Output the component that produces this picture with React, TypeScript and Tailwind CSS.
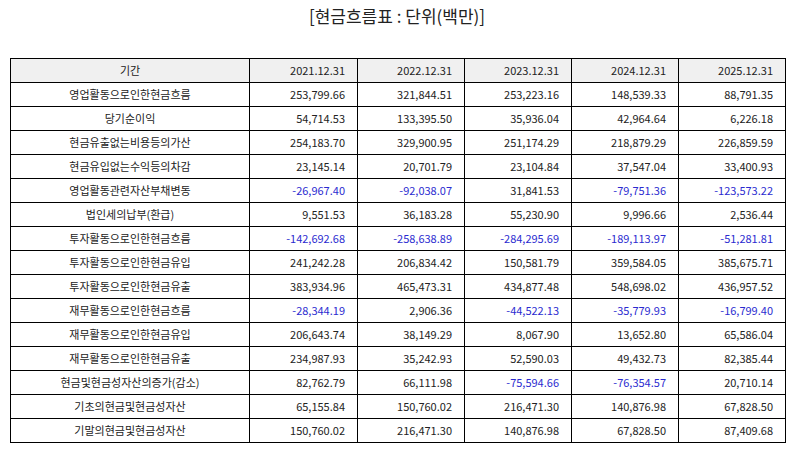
const years = ["2021.12.31", "2022.12.31", "2023.12.31", "2024.12.31", "2025.12.31"];

const rows: [string, string[]][] = [
  ["영업활동으로인한현금흐름", ["253,799.66", "321,844.51", "253,223.16", "148,539.33", "88,791.35"]],
  ["당기순이익", ["54,714.53", "133,395.50", "35,936.04", "42,964.64", "6,226.18"]],
  ["현금유출없는비용등의가산", ["254,183.70", "329,900.95", "251,174.29", "218,879.29", "226,859.59"]],
  ["현금유입없는수익등의차감", ["23,145.14", "20,701.79", "23,104.84", "37,547.04", "33,400.93"]],
  ["영업활동관련자산부채변동", ["-26,967.40", "-92,038.07", "31,841.53", "-79,751.36", "-123,573.22"]],
  ["법인세의납부(환급)", ["9,551.53", "36,183.28", "55,230.90", "9,996.66", "2,536.44"]],
  ["투자활동으로인한현금흐름", ["-142,692.68", "-258,638.89", "-284,295.69", "-189,113.97", "-51,281.81"]],
  ["투자활동으로인한현금유입", ["241,242.28", "206,834.42", "150,581.79", "359,584.05", "385,675.71"]],
  ["투자활동으로인한현금유출", ["383,934.96", "465,473.31", "434,877.48", "548,698.02", "436,957.52"]],
  ["재무활동으로인한현금흐름", ["-28,344.19", "2,906.36", "-44,522.13", "-35,779.93", "-16,799.40"]],
  ["재무활동으로인한현금유입", ["206,643.74", "38,149.29", "8,067.90", "13,652.80", "65,586.04"]],
  ["재무활동으로인한현금유출", ["234,987.93", "35,242.93", "52,590.03", "49,432.73", "82,385.44"]],
  ["현금및현금성자산의증가(감소)", ["82,762.79", "66,111.98", "-75,594.66", "-76,354.57", "20,710.14"]],
  ["기초의현금및현금성자산", ["65,155.84", "150,760.02", "216,471.30", "140,876.98", "67,828.50"]],
  ["기말의현금및현금성자산", ["150,760.02", "216,471.30", "140,876.98", "67,828.50", "87,409.68"]],
];

export default function App() {
  return (
    <div className="w-[794px] h-[452px] bg-white text-[#222] font-['Noto_Sans_CJK_KR',sans-serif]">
      <h1 className="pt-[4px] h-[58px] text-center text-[17px] leading-[24px] text-[#222]">
        [현금흐름표 : 단위(백만)]
      </h1>
      <table className="ml-[10px] w-[775px] border-collapse table-fixed text-[11px]">
        <colgroup>
          <col className="w-[239px]" />
          <col className="w-[108px]" />
          <col className="w-[107px]" />
          <col className="w-[107px]" />
          <col className="w-[107px]" />
          <col className="w-[107px]" />
        </colgroup>
        <thead>
          <tr className="h-[24px] bg-[#f0f0f0]">
            <th className="border border-black font-normal text-center p-0">기간</th>
            {years.map((y) => (
              <th key={y} className="border border-black font-normal text-right p-0 pr-[12px]">
                {y}
              </th>
            ))}
          </tr>
        </thead>
        <tbody>
          {rows.map(([label, vals]) => (
            <tr key={label} className="h-[24px]">
              <td className="border border-black text-center p-0">{label}</td>
              {vals.map((v, i) => (
                <td
                  key={i}
                  className={
                    v.startsWith("-")
                      ? "border border-black text-right p-0 pr-[12px] text-[#2b2bd0]"
                      : "border border-black text-right p-0 pr-[12px]"
                  }
                >
                  {v}
                </td>
              ))}
            </tr>
          ))}
        </tbody>
      </table>
    </div>
  );
}
